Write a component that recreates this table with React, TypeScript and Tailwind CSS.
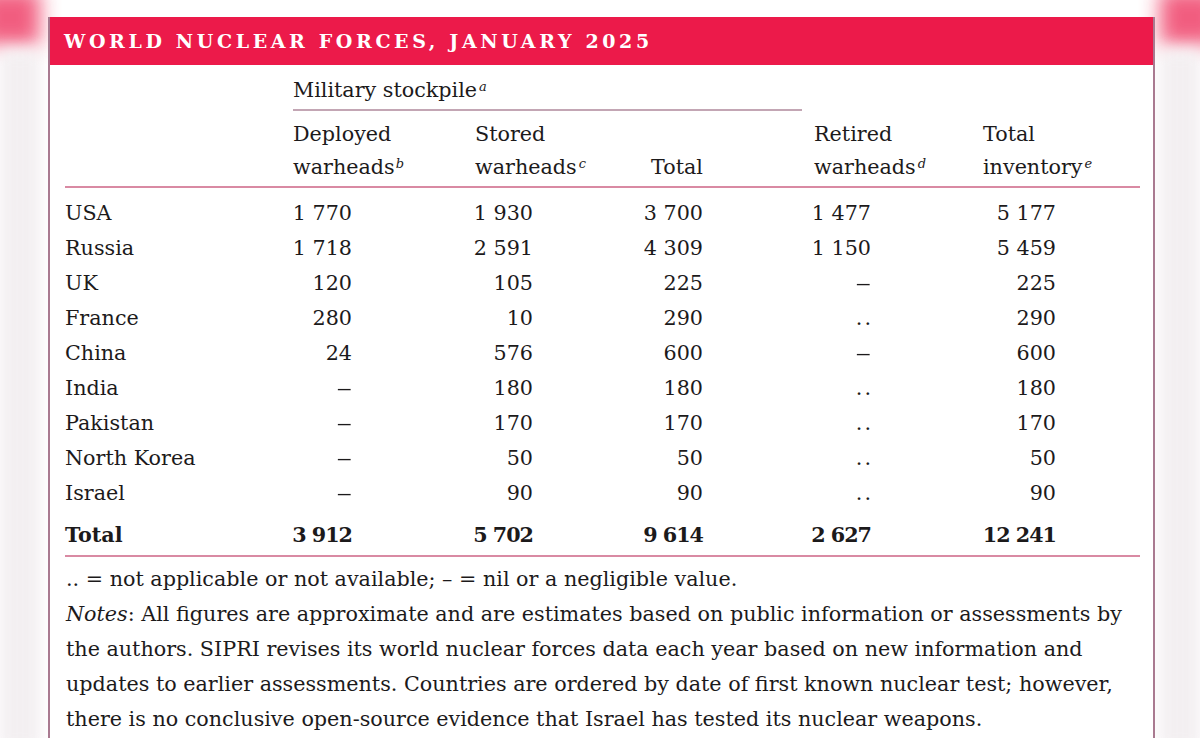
const rows = [
  ["USA", "1 770", "1 930", "3 700", "1 477", "5 177"],
  ["Russia", "1 718", "2 591", "4 309", "1 150", "5 459"],
  ["UK", "120", "105", "225", "–", "225"],
  ["France", "280", "10", "290", "..", "290"],
  ["China", "24", "576", "600", "–", "600"],
  ["India", "–", "180", "180", "..", "180"],
  ["Pakistan", "–", "170", "170", "..", "170"],
  ["North Korea", "–", "50", "50", "..", "50"],
  ["Israel", "–", "90", "90", "..", "90"],
];

const totals = ["Total", "3 912", "5 702", "9 614", "2 627", "12 241"];

// right padding of each number column, so numbers line up at their right edge
const pads = ["", "pr-[123px]", "pr-[113px]", "pr-[111px]", "pr-[112px]", "pr-[84px]"];

function Cell({ value, col, bold }: { value: string; col: number; bold?: boolean }) {
  if (col === 0) {
    return <div className={bold ? "font-bold" : ""}>{value}</div>;
  }
  let mark = "";
  if (value === "–") mark = "mr-[3px] scale-x-150";
  if (value === "..") mark = "tracking-[2px] -mr-[2px]";
  return (
    <div className={`flex justify-end min-w-0 ${pads[col]} ${bold ? "font-bold tracking-[-1px]" : ""}`}>
      <span className={`shrink-0 ${mark}`}>{value}</span>
    </div>
  );
}

export default function App() {
  return (
    <div className="relative w-[1200px] h-[738px] overflow-hidden bg-white font-['DejaVu_Serif',serif] text-[#1c1a1b]">
      {/* blurred backdrop around the picture */}
      <div className="absolute -left-[20px] top-[-10px] w-[60px] h-[55px] bg-[#ec1a4a] opacity-70 blur-[10px]" />
      <div className="absolute right-[-20px] top-[-10px] w-[60px] h-[55px] bg-[#ec1a4a] opacity-70 blur-[10px]" />
      <div className="absolute left-0 top-[50px] w-[40px] h-[700px] bg-[#f3eff1] blur-[8px]" />
      <div className="absolute right-0 top-[50px] w-[40px] h-[700px] bg-[#f3eff1] blur-[8px]" />

      <div className="relative ml-[48px] mt-[17px] w-[1107px] h-[740px] bg-white border-x-2 border-[#a97a90]">
        <div className="h-[48px] bg-[#ec1a4a] flex items-center pl-[14px]">
          <span className="text-white font-bold text-[19px] tracking-[0.19em] leading-none pt-[1px]">
            WORLD NUCLEAR FORCES, JANUARY 2025
          </span>
        </div>

        <div className="pl-[15px] pr-[13px] text-[20.7px] whitespace-nowrap">
          <div className="grid grid-cols-[228px_182px_171px_168px_169px_minmax(0,1fr)]">
            {/* group header */}
            <div />
            <div className="col-span-3 mr-[12px] pt-[10px] pb-[3px] leading-[31px] border-b-2 border-[#c3a6b4]">
              Military stockpile<sup className="italic text-[13px] ml-[2px]">a</sup>
            </div>
            <div className="col-span-2" />

            {/* column headers */}
            <div className="col-span-6 grid grid-cols-subgrid border-b-2 border-[#d98aa3] pt-[7px] pb-[2px] leading-[33px]">
              <div />
              <div>
                Deployed
                <br />
                warheads<sup className="italic text-[13px] ml-[1px]">b</sup>
              </div>
              <div>
                Stored
                <br />
                warheads<sup className="italic text-[13px] ml-[2px]">c</sup>
              </div>
              <div className="text-right pr-[111px] self-end">Total</div>
              <div>
                Retired
                <br />
                warheads<sup className="italic text-[13px] ml-[2px]">d</sup>
              </div>
              <div>
                Total
                <br />
                inventory<sup className="italic text-[13px] ml-[2px]">e</sup>
              </div>
            </div>

            {/* body */}
            <div className="col-span-6 grid grid-cols-subgrid pt-[8px] leading-[35px]">
              {rows.map((r) =>
                r.map((v, i) => <Cell key={r[0] + i} value={v} col={i} />)
              )}
            </div>
            <div className="col-span-6 grid grid-cols-subgrid mt-[7px] pb-[2px] leading-[35px] border-b-2 border-[#d98aa3]">
              {totals.map((v, i) => (
                <Cell key={"t" + i} value={v} col={i} bold />
              ))}
            </div>
          </div>

          <div className="pt-[5px] leading-[35px] pl-[1px]">
            <div>.. = not applicable or not available; – = nil or a negligible value.</div>
            <div>
              <i>Notes</i>: All figures are approximate and are estimates based on public information or assessments by
            </div>
            <div>the authors. SIPRI revises its world nuclear forces data each year based on new information and</div>
            <div>updates to earlier assessments. Countries are ordered by date of first known nuclear test; however,</div>
            <div>there is no conclusive open-source evidence that Israel has tested its nuclear weapons.</div>
          </div>
        </div>
      </div>
    </div>
  );
}
